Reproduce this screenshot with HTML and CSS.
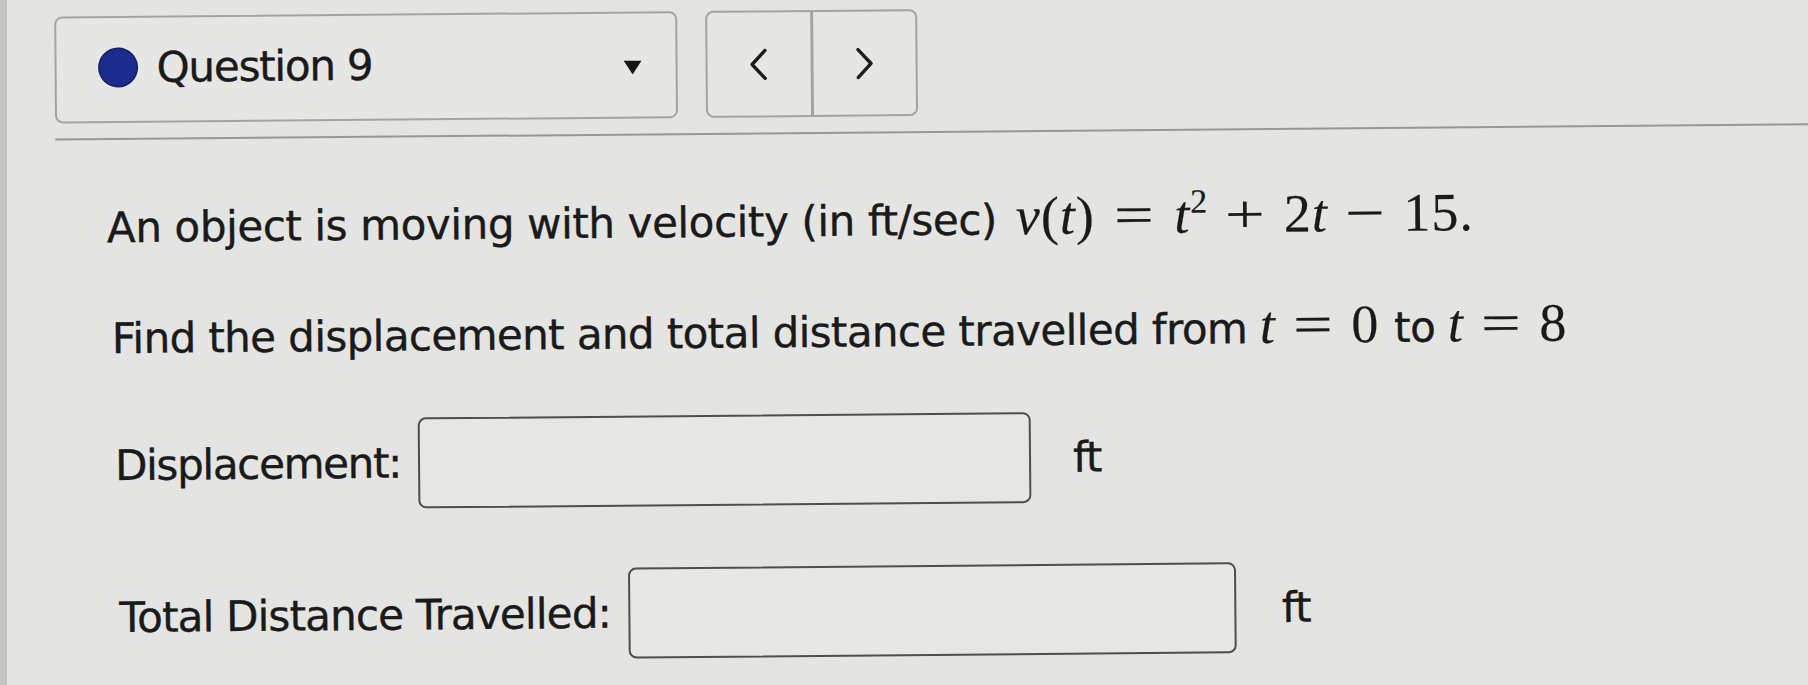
FILE: index.html
```html
<!DOCTYPE html>
<html lang="en">
<head>
<meta charset="utf-8">
<title>Question 9</title>
<link rel="stylesheet" href="styles.css">
</head>
<body>
<div class="page">
  <div class="content">
    <header class="qbar">
      <div class="qselect">
        <span class="dot"></span>
        <span class="qtitle">Question 9</span>
        <svg class="caret" width="18" height="14" viewBox="0 0 18 14"><path d="M0 0 H18 L9 14 Z"/></svg>
      </div>
      <div class="qnav">
        <button class="navbtn"><svg width="20" height="32" viewBox="0 0 20 32"><path d="M16.5 2 L3.5 16 L16.5 30"/></svg></button>
        <button class="navbtn"><svg width="20" height="32" viewBox="0 0 20 32"><path d="M3.5 2 L16.5 16 L3.5 30"/></svg></button>
      </div>
    </header>
    <div class="rule"></div>
    <main class="question">
      <p class="line l1">An object is moving with velocity (in ft/sec) <span class="math"><span class="mi">v</span><span class="mp">(</span><span class="mi">t</span><span class="mp">)</span><span class="mo rel">=</span><span class="mi">t</span><sup class="sup">2</sup><span class="mo bin">+</span><span class="mn">2</span><span class="mi">t</span><span class="mo bin">&minus;</span><span class="mn">15.</span></span></p>
      <p class="line l2">Find the displacement and total distance travelled from <span class="math"><span class="mi">t</span><span class="mo rel">=</span><span class="mn">0</span></span> to <span class="math"><span class="mi">t</span><span class="mo rel">=</span><span class="mn">8</span></span></p>
      <div class="answer a1">
        <label class="alabel" for="disp">Displacement:</label>
        <input class="abox box1" id="disp" type="text">
        <span class="unit">ft</span>
      </div>
      <div class="answer a2">
        <label class="alabel" for="dist">Total Distance Travelled:</label>
        <input class="abox box2" id="dist" type="text">
        <span class="unit">ft</span>
      </div>
    </main>
  </div>
</div>
</body>
</html>
```
FILE: styles.css
```css
html, body {
  margin: 0;
  padding: 0;
}
body {
  background: #e4e5e2;
  font-family: "DejaVu Sans", Verdana, sans-serif;
  color: #1a1a1a;
  width: 1808px;
  height: 685px;
  overflow: hidden;
}
.page {
  border-left: 7px solid #c3c4c1;
  height: 685px;
  box-sizing: border-box;
}
.content {
  transform: rotate(-0.5deg);
  transform-origin: 0 0;
  -webkit-text-stroke: 0.4px currentColor;
}
.qbar {
  display: flex;
  gap: 28px;
  padding: 17px 0 0 47px;
}
.qselect {
  width: 623px;
  height: 107px;
  box-sizing: border-box;
  border: 2px solid #a4a5a2;
  border-radius: 8px;
  background: #e6e7e4;
  display: flex;
  align-items: center;
  padding: 0 34px 4px 43px;
}
.dot {
  width: 37px;
  height: 37px;
  border-radius: 50%;
  background: #1b2b8e;
  box-shadow: 0 0 0 1.5px #16205a;
  flex: none;
}
.qtitle {
  font-size: 42px;
  letter-spacing: -1.2px;
  margin-left: 20px;
  flex: 1;
}
.caret {
  fill: #151515;
  flex: none;
  margin-top: 9px;
}
.qnav {
  width: 212px;
  height: 107px;
  box-sizing: border-box;
  border: 2px solid #a4a5a2;
  border-radius: 8px;
  background: #e6e7e4;
  display: flex;
}
.navbtn {
  flex: 1;
  border: none;
  background: transparent;
  display: flex;
  align-items: center;
  justify-content: center;
  padding: 0;
}
.navbtn + .navbtn {
  border-left: 3px solid #a4a5a2;
}
.navbtn path {
  fill: none;
  stroke: #1d1d1d;
  stroke-width: 3.4;
  stroke-linecap: round;
  stroke-linejoin: round;
}
.rule {
  margin: 15px 0 0 47px;
  border-top: 2px solid #979895;
}
.question {
  padding-left: 98px;
}
.line {
  margin: 0;
  font-size: 42px;
  line-height: 60px;
  white-space: nowrap;
}
.l1 {
  margin-top: 57px;
  letter-spacing: -0.4px;
}
.l2 {
  margin-top: 50px;
  margin-left: 4px;
  letter-spacing: -0.6px;
}
.math {
  font-family: "Liberation Serif", "DejaVu Serif", serif;
  font-size: 54px;
  letter-spacing: 1px;
  line-height: 1;
  -webkit-text-stroke: 0.2px currentColor;
}
.l1 .math {
  margin-left: 6px;
}
.l2 .math {
  margin-left: 0;
  margin-right: 2px;
}
.mi {
  font-style: italic;
}
.mo {
  display: inline-block;
  transform: scaleX(1.3);
}
.rel {
  margin: 0 24px;
}
.l2 .rel {
  margin: 0 22px;
}
.bin {
  margin: 0 22px;
}
.sup {
  font-size: 34px;
  vertical-align: 0;
  position: relative;
  top: -20px;
  line-height: 0;
}
.answer {
  display: flex;
  align-items: center;
  font-size: 42px;
}
.a1 {
  margin-top: 51px;
  margin-left: 6px;
  letter-spacing: -1.3px;
}
.a2 {
  margin-top: 61px;
  margin-left: 9px;
  letter-spacing: -0.8px;
}
.alabel {
  margin-right: 17px;
}
.abox {
  height: 91px;
  box-sizing: border-box;
  border: 2.5px solid #4e4f4d;
  border-radius: 8px;
  background: #e7e8e5;
  margin: 0;
  padding: 0;
  outline: none;
}
.box1 {
  width: 613px;
}
.box2 {
  width: 608px;
}
.a1 .unit {
  margin-left: 42px;
}
.a2 .unit {
  margin-left: 46px;
}
```
